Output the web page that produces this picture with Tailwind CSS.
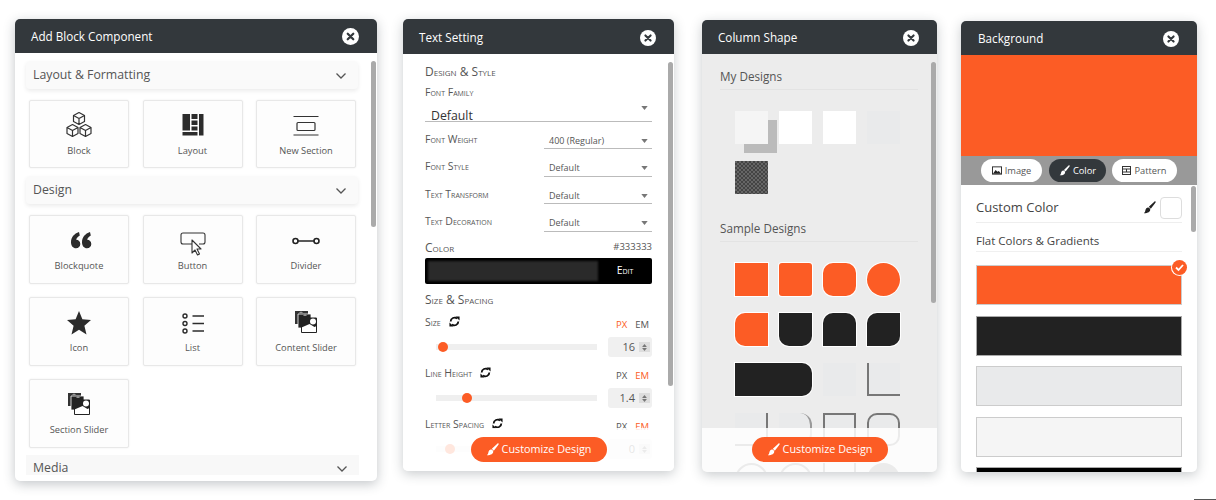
<!DOCTYPE html>
<html lang="en">
<head>
<meta charset="utf-8">
<title>Panels</title>
<script src="https://cdn.jsdelivr.net/npm/@tailwindcss/browser@4"></script>
</head>
<body class="bg-white font-['Open_Sans',sans-serif] overflow-hidden">
<svg class="hidden">
  <symbol id="x" viewBox="0 0 16 16"><circle cx="8" cy="8" r="8" fill="#fff"/><path d="M5.400 5.400l5.200 5.200M10.600 5.400l-5.200 5.200" stroke="#33383c" stroke-width="2.100" stroke-linecap="round"/></symbol>
  <symbol id="chev" viewBox="0 0 12 8"><path d="M1.500 1.500L6 6l4.500-4.500" fill="none" stroke="#555" stroke-width="1.300"/></symbol>
  <symbol id="brush" viewBox="0 0 16 16"><path d="M15.400.7c.4.4.3 1-.1 1.500L9.600 9.500 7.200 7.100 13.900.8c.5-.4 1.100-.5 1.500-.1zM6.500 8c1.300.2 2.200 1.100 2.400 2.400.1 2.600-2.300 4.600-7.900 4.600 1.500-1.200 1.700-2.200 2-3.800.3-1.700 1.700-3.400 3.500-3.200z" fill="currentColor"/></symbol>
  <symbol id="sync" viewBox="0 0 12 12"><path d="M1.800 6A4.200 4.200 0 0 1 8.800 2.900" fill="none" stroke="#111" stroke-width="2"/><path d="M7 .5h4.500V5z" fill="#111"/><path d="M10.200 6A4.200 4.200 0 0 1 3.200 9.100" fill="none" stroke="#111" stroke-width="2"/><path d="M5 11.500H.5V7z" fill="#111"/></symbol>
  <symbol id="caret" viewBox="0 0 8 5"><path d="M0 0h8L4 5z" fill="#777"/></symbol>
  <symbol id="stack" viewBox="0 0 22 22"><path d="M0 0h13v13H0z" fill="#333"/><path d="M3 3h13v14H3z" fill="#222" stroke="#fff" stroke-width=".8"/><path d="M6.500 7h15v14.500h-15z" fill="#fff" stroke="#222" stroke-width="1"/><path d="M6.500 7h15v8l-2 1-5-3-8 3.500z" fill="#222"/><circle cx="18" cy="10.500" r="3" fill="#fff"/><path d="M4 1.500c1-1 3-1 4 0zM8 4.500c1-1 3-1 4 0z" fill="#fff"/></symbol>
</svg>

<div class="flex items-start h-[500px] pl-[15px]">

  <!-- Add Block Component -->
  <section class="relative w-[362px] h-[462px] mt-[19px] bg-white rounded-[5px] shadow-[0_3px_12px_rgba(40,50,60,0.28)] overflow-hidden shrink-0">
    <header class="h-[34px] pt-[1px] bg-[#33383c] flex items-center justify-between pl-4 pr-[18px] text-white text-[11.700px]">
      <span>Add Block Component</span>
      <svg class="w-[17px] h-[17px]"><use href="#x"/></svg>
    </header>
    <div class="h-[422px] overflow-hidden pl-[11px] pt-2">
      <div class="w-[332px] h-7 pt-[1px] bg-[#fafafa] rounded shadow-[0_2px_4px_rgba(0,0,0,0.08)] flex items-center justify-between pl-[7px] pr-[11px] text-[12.300px] text-[#555]"><span>Layout &amp; Formatting</span><svg class="w-[12px] h-2"><use href="#chev"/></svg></div>
      <div class="grid grid-cols-[100px_100px_100px] gap-x-[13.500px] pl-[3px] mt-[11px]">
        <div class="h-[68px] border border-[#e8e8e8] bg-[#fdfdfd] rounded-[2px] shadow-[0_0_2px_rgba(0,0,0,0.08)] flex flex-col items-center pt-[12px] text-[9.300px] text-[#555]">
          <svg class="h-7 w-7 mb-[3px] overflow-visible" viewBox="0 2 28 28" fill="none" stroke="#333" stroke-width="1.200" stroke-linejoin="round"><path d="M14 1.500l5.500 3v6l-5.500 3-5.500-3v-6zM8.500 4.500L14 7.500l5.500-3M14 7.500v6"/><path d="M7.500 13.500l5.500 3v6l-5.500 3-5.500-3v-6zM2 16.500l5.500 3 5.500-3M7.500 19.500v6"/><path d="M20.500 13.500l5.500 3v6l-5.500 3-5.500-3v-6zM15 16.500l5.500 3 5.500-3M20.500 19.500v6"/></svg>
          <span>Block</span>
        </div>
        <div class="h-[68px] border border-[#e8e8e8] bg-[#fdfdfd] rounded-[2px] shadow-[0_0_2px_rgba(0,0,0,0.08)] flex flex-col items-center pt-[12px] text-[9.300px] text-[#555]">
          <svg class="h-7 w-7 mb-[3px] overflow-visible" viewBox="0 2 28 28" fill="#2c2c2c"><path d="M3.500 3h7.500v16.500H3.500zM12.500 3h6v5h-6zM20 3h4.500v21.500H20zM12.500 9.500h6v4.500h-6zM12.500 15.500h6v4h-6zM3.500 21h15v3.500h-15z"/></svg>
          <span>Layout</span>
        </div>
        <div class="h-[68px] border border-[#e8e8e8] bg-[#fdfdfd] rounded-[2px] shadow-[0_0_2px_rgba(0,0,0,0.08)] flex flex-col items-center pt-[12px] text-[9.300px] text-[#555]">
          <svg class="h-7 w-7 mb-[3px]" viewBox="0 0 28 28" fill="none" stroke="#333" stroke-width="1.200"><path d="M1.500 3.500h25M1.500 22h25"/><rect x="5" y="9.500" width="18" height="8" rx="1"/></svg>
          <span>New Section</span>
        </div>
      </div>
      <div class="w-[332px] h-7 pt-[1px] bg-[#fafafa] rounded shadow-[0_2px_4px_rgba(0,0,0,0.08)] flex items-center justify-between pl-[7px] pr-[11px] text-[12.300px] text-[#555] mt-2"><span>Design</span><svg class="w-[12px] h-2"><use href="#chev"/></svg></div>
      <div class="grid grid-cols-[100px_100px_100px] gap-x-[13.500px] gap-y-[13px] pl-[3px] mt-[11px]">
        <div class="h-[69px] border border-[#e8e8e8] bg-[#fdfdfd] rounded-[2px] shadow-[0_0_2px_rgba(0,0,0,0.08)] flex flex-col items-center pt-[12px] text-[9.300px] text-[#555]">
          <svg class="h-7 w-7 mb-[3px]" viewBox="0 0 28 28" fill="#2c2c2c"><path d="M14 4c-4.800 1.700-8 5.200-8 10.300 0 3.700 2.100 6 5 6 2.500 0 4.300-1.900 4.300-4.300 0-2.500-1.800-4.200-4.100-4.200.4-1.700 1.500-3 3.600-4.200zM25 4c-4.800 1.700-8 5.200-8 10.300 0 3.700 2.100 6 5 6 2.500 0 4.300-1.900 4.300-4.300 0-2.500-1.800-4.200-4.100-4.200.4-1.700 1.500-3 3.600-4.200z"/></svg>
          <span>Blockquote</span>
        </div>
        <div class="h-[69px] border border-[#e8e8e8] bg-[#fdfdfd] rounded-[2px] shadow-[0_0_2px_rgba(0,0,0,0.08)] flex flex-col items-center pt-[12px] text-[9.300px] text-[#555]">
          <svg class="h-7 w-7 mb-[3px]" viewBox="0 0 28 28" fill="none" stroke="#333" stroke-width="1.100"><path d="M13 16H4a2 2 0 0 1-2-2V7a2 2 0 0 1 2-2h20a2 2 0 0 1 2 2v7a2 2 0 0 1-2 2h-4"/><path d="M13 12v13l3-3 2.500 5 2-1-2.500-5h4z" fill="#fff" stroke-linejoin="round"/></svg>
          <span>Button</span>
        </div>
        <div class="h-[69px] border border-[#e8e8e8] bg-[#fdfdfd] rounded-[2px] shadow-[0_0_2px_rgba(0,0,0,0.08)] flex flex-col items-center pt-[12px] text-[9.300px] text-[#555]">
          <svg class="h-7 w-7 mb-[3px]" viewBox="0 0 28 28" fill="none" stroke="#222" stroke-width="1.600"><circle cx="3.500" cy="13" r="2.500"/><circle cx="24.500" cy="13" r="2.500"/><path d="M6 13h16"/></svg>
          <span>Divider</span>
        </div>
        <div class="h-[69px] border border-[#e8e8e8] bg-[#fdfdfd] rounded-[2px] shadow-[0_0_2px_rgba(0,0,0,0.08)] flex flex-col items-center pt-[12px] text-[9.300px] text-[#555]">
          <svg class="h-7 w-7 mb-[3px]" viewBox="0 0 28 28" fill="#2c2c2c"><path d="M14 1l3.400 8.300 8.600.7-6.600 5.700 2.100 8.800L14 19.700 6.500 24.500l2.100-8.800L2 10l8.600-.7z"/></svg>
          <span>Icon</span>
        </div>
        <div class="h-[69px] border border-[#e8e8e8] bg-[#fdfdfd] rounded-[2px] shadow-[0_0_2px_rgba(0,0,0,0.08)] flex flex-col items-center pt-[12px] text-[9.300px] text-[#555]">
          <svg class="h-7 w-7 mb-[3px]" viewBox="0 0 28 28" fill="none" stroke="#2c2c2c" stroke-width="1.400"><circle cx="6" cy="6" r="2"/><circle cx="6" cy="13.500" r="2"/><circle cx="6" cy="21" r="2"/><path d="M13.500 6H25M13.500 13.500H25M13.500 21H25"/></svg>
          <span>List</span>
        </div>
        <div class="h-[69px] border border-[#e8e8e8] bg-[#fdfdfd] rounded-[2px] shadow-[0_0_2px_rgba(0,0,0,0.08)] flex flex-col items-center pt-[12px] text-[9.300px] text-[#555]">
          <svg class="h-[22px] w-[22px] mt-[1px] mb-[8px]"><use href="#stack"/></svg>
          <span>Content Slider</span>
        </div>
        <div class="h-[69px] border border-[#e8e8e8] bg-[#fdfdfd] rounded-[2px] shadow-[0_0_2px_rgba(0,0,0,0.08)] flex flex-col items-center pt-[12px] text-[9.300px] text-[#555]">
          <svg class="h-[22px] w-[22px] mt-[1px] mb-[8px]"><use href="#stack"/></svg>
          <span>Section Slider</span>
        </div>
      </div>
      <div class="w-[333px] h-5 bg-[#f8f8f8] flex items-start justify-between pl-[7px] pr-[11px] pt-[5px] text-[12.300px] text-[#555] mt-[7px]"><span class="leading-[15px]">Media</span><svg class="w-[12px] h-2 mt-[5px]"><use href="#chev"/></svg></div>
    </div>
    <div class="absolute right-[1px] top-[42px] w-[5px] h-[166px] rounded bg-[#aaa]"></div>
  </section>

  <!-- Text Setting -->
  <section class="relative w-[271px] h-[452px] mt-[19px] ml-[26px] bg-white rounded-[5px] shadow-[0_3px_12px_rgba(40,50,60,0.25)] overflow-hidden shrink-0 text-[#555] [font-variant:small-caps]">
    <header class="h-[35px] pt-[2px] bg-[#33383c] flex items-center justify-between pl-4 pr-[18px] text-white text-[11.700px] [font-variant:normal]">
      <span>Text Setting</span>
      <svg class="w-4 h-4"><use href="#x"/></svg>
    </header>
    <div class="px-[22px] pt-[9px] w-[271px]">
      <div class="text-[12px] leading-[18px]">Design &amp; Style</div>
      <div class="text-[10.500px] leading-[16px] mt-[3px]">Font Family</div>
      <div class="flex items-center justify-between h-[21px] mt-[1px] pt-[9px] border-b border-[#bbb] pl-[6px] pr-[4px] text-[12.300px] leading-[12px] [font-variant:normal] text-[#333]"><span>Default</span><svg class="w-[7px] h-1 -mt-4"><use href="#caret"/></svg></div>
      <div class="flex items-end justify-between h-[27px]"><span class="text-[10.500px] self-center mt-[9px]">Font Weight</span><span class="w-[108px] h-[19px] pt-[4px] border-b border-[#bbb] pl-[5px] pr-[4px] flex items-center justify-between text-[9px] [font-variant:normal]">400 (Regular)<svg class="w-[7px] h-1"><use href="#caret"/></svg></span></div>
      <div class="flex items-end justify-between h-[27.500px]"><span class="text-[10.500px] self-center mt-[9px]">Font Style</span><span class="w-[108px] h-[19px] pt-[3px] border-b border-[#bbb] pl-[5px] pr-[4px] flex items-center justify-between text-[9px] [font-variant:normal]">Default<svg class="w-[7px] h-1"><use href="#caret"/></svg></span></div>
      <div class="flex items-end justify-between h-[27.500px]"><span class="text-[10.500px] self-center mt-[9px]">Text Transform</span><span class="w-[108px] h-[19px] pt-[3px] border-b border-[#bbb] pl-[5px] pr-[4px] flex items-center justify-between text-[9px] [font-variant:normal]">Default<svg class="w-[7px] h-1"><use href="#caret"/></svg></span></div>
      <div class="flex items-end justify-between h-[27.500px]"><span class="text-[10.500px] self-center mt-[9px]">Text Decoration</span><span class="w-[108px] h-[19px] pt-[3px] border-b border-[#bbb] pl-[5px] pr-[4px] flex items-center justify-between text-[9px] [font-variant:normal]">Default<svg class="w-[7px] h-1"><use href="#caret"/></svg></span></div>
      <div class="flex items-center justify-between h-[18px] mt-[7px] text-[12px]"><span>Color</span><span class="text-[9.500px] [font-variant:normal]">#333333</span></div>
      <div class="h-[26px] mt-[1.500px] bg-black rounded-[2px] flex items-center justify-between pl-[3px] py-[3px]"><div class="w-[170px] h-full bg-[#2a2a2a] blur-[1px]"></div><span class="text-[10.500px] text-white w-[54px] text-center">Edit</span></div>
      <div class="text-[12px] leading-[18px] mt-[7px]">Size &amp; Spacing</div>
      <div class="flex items-center justify-between h-[16px] mt-[7px] pr-[3px]"><span class="flex items-center gap-[8px] text-[10.500px] -mt-[3px]">Size <svg class="w-[11px] h-[11px] -mt-[3px]"><use href="#sync"/></svg></span><span class="flex gap-[8px] text-[9.500px] uppercase [font-variant:normal] mt-[2px] text-[#555]"><span class="text-[#fc5c25]">px</span><span>em</span></span></div>
      <div class="flex items-center justify-between h-[20px] mt-[5px] pl-[11px]"><div class="relative w-[161px] h-[6px] bg-[#efefef]"><span class="absolute left-[2px] -top-[2px] w-[10px] h-[10px] rounded-full bg-[#fc5c25]"></span></div><div class="w-[44px] h-[20px] bg-[#f0f0f0] rounded-[3px] flex items-center justify-end gap-[4px] pr-[2px] text-[11px] [font-variant:normal]">16<span class="w-[11px] h-[10px] bg-[#ddd] flex flex-col items-center justify-center gap-[1px]"><svg class="w-[5px] h-[3px] rotate-180"><use href="#caret"/></svg><svg class="w-[5px] h-[3px]"><use href="#caret"/></svg></span></div></div>
      <div class="flex items-center justify-between h-[16px] mt-[10px] pr-[3px]"><span class="flex items-center gap-[8px] text-[10.500px] -mt-[3px]">Line Height <svg class="w-[11px] h-[11px] -mt-[3px]"><use href="#sync"/></svg></span><span class="flex gap-[8px] text-[9.500px] uppercase [font-variant:normal] mt-[2px] text-[#555]"><span>px</span><span class="text-[#fc5c25]">em</span></span></div>
      <div class="flex items-center justify-between h-[20px] mt-[5px] pl-[11px]"><div class="relative w-[161px] h-[6px] bg-[#efefef]"><span class="absolute left-[26px] -top-[2px] w-[10px] h-[10px] rounded-full bg-[#fc5c25]"></span></div><div class="w-[44px] h-[20px] bg-[#f0f0f0] rounded-[3px] flex items-center justify-end gap-[4px] pr-[2px] text-[11px] [font-variant:normal]">1.4<span class="w-[11px] h-[10px] bg-[#ddd] flex flex-col items-center justify-center gap-[1px]"><svg class="w-[5px] h-[3px] rotate-180"><use href="#caret"/></svg><svg class="w-[5px] h-[3px]"><use href="#caret"/></svg></span></div></div>
      <div class="flex items-center justify-between h-[16px] mt-[10px] pr-[3px]"><span class="flex items-center gap-[8px] text-[10.500px] -mt-[3px]">Letter Spacing <svg class="w-[11px] h-[11px] -mt-[3px]"><use href="#sync"/></svg></span><span class="flex gap-[8px] text-[9.500px] uppercase [font-variant:normal] mt-[2px] text-[#555]"><span>px</span><span class="text-[#fc5c25]">em</span></span></div>
      <div class="flex items-center justify-between h-[20px] mt-[5px] pl-[11px]"><div class="relative w-[161px] h-[6px] bg-[#efefef]"><span class="absolute left-[9px] -top-[2px] w-[10px] h-[10px] rounded-full bg-[#fc5c25]"></span></div><div class="w-[44px] h-[20px] bg-[#f0f0f0] rounded-[3px] flex items-center justify-end gap-[4px] pr-[2px] text-[11px] [font-variant:normal]">0<span class="w-[11px] h-[10px] bg-[#ddd] flex flex-col items-center justify-center gap-[1px]"><svg class="w-[5px] h-[3px] rotate-180"><use href="#caret"/></svg><svg class="w-[5px] h-[3px]"><use href="#caret"/></svg></span></div></div>
    </div>
    <div class="absolute left-0 right-0 bottom-0 h-[43px] bg-white/85 flex items-start justify-center pt-[9px] [font-variant:normal]">
      <span class="w-[136px] h-[25px] rounded-full bg-[#fc5c25] text-white text-[10.800px] flex items-center justify-center gap-[3px]"><svg class="w-[13px] h-[13px]"><use href="#brush"/></svg>Customize Design</span>
    </div>
    <div class="absolute right-[1px] top-[43px] w-[5px] h-[324px] rounded bg-[#aaa]"></div>
  </section>

  <!-- Column Shape -->
  <section class="relative w-[235px] h-[452px] mt-[20px] ml-[28px] bg-[#ececec] rounded-[5px] shadow-[0_3px_12px_rgba(40,50,60,0.25)] overflow-hidden shrink-0 text-[#555]">
    <header class="h-[34px] pt-[2px] bg-[#33383c] flex items-center justify-between pl-4 pr-[18px] text-white text-[11.700px]">
      <span>Column Shape</span>
      <svg class="w-4 h-4"><use href="#x"/></svg>
    </header>
    <div class="pl-[18px] pt-[12px]">
      <div class="w-[198px] h-[24px] border-b border-[#e3e3e3] text-[11.700px] leading-[20px]">My Designs</div>
      <div class="grid grid-cols-[33px_33px_33px_33px] auto-rows-[33px] gap-x-[11px] gap-y-[17px] pl-[15px] mt-[21px]">
        <div class="bg-[#f5f5f5] shadow-[9px_9px_0_#bbb]"></div>
        <div class="bg-white relative"></div>
        <div class="bg-white"></div>
        <div class="bg-[#e9eaeb]"></div>
        <div class="bg-[repeating-conic-gradient(#444_0_25%,#666_0_50%)] bg-size-[4px_4px]"></div>
      </div>
      <div class="w-[198px] h-[24px] border-b border-[#e3e3e3] text-[11.700px] leading-[20px] mt-[24px]">Sample Designs</div>
      <div class="grid grid-cols-[33px_33px_33px_33px] auto-rows-[33px] gap-x-[11px] gap-y-[17px] pl-[15px] mt-[21px]">
        <div class="bg-[#fc5c25] ring-1 ring-white"></div>
        <div class="bg-[#fc5c25] ring-1 ring-white rounded-[3px]"></div>
        <div class="bg-[#fc5c25] ring-1 ring-white rounded-[10px]"></div>
        <div class="bg-[#fc5c25] ring-1 ring-white rounded-full"></div>
        <div class="bg-[#fc5c25] ring-1 ring-white rounded-l-[10px]"></div>
        <div class="bg-[#222] ring-1 ring-white rounded-b-[10px]"></div>
        <div class="bg-[#222] ring-1 ring-white rounded-t-[10px]"></div>
        <div class="bg-[#222] ring-1 ring-white rounded-tl-[10px] rounded-br-[10px]"></div>
        <div class="col-span-2 bg-[#222] ring-1 ring-white rounded-r-[10px]"></div>
        <div class="bg-[#e9eaeb]"></div>
        <div class="border-l-2 border-b-2 border-[#777] bg-[#e9eaeb]"></div>
        <div class="border-r-2 border-b-2 border-[#777] bg-[#e9eaeb]"></div>
        <div class="border-r-2 border-[#999] rounded-r-[12px] bg-[#e9eaeb]"></div>
        <div class="border-2 border-[#777] bg-[#e9eaeb]"></div>
        <div class="border-2 border-[#777] rounded-[10px] bg-[#e9eaeb]"></div>
        <div class="border-2 border-[#777] rounded-full bg-[#e9eaeb]"></div>
        <div class="border-2 border-[#777] rounded-full bg-[#e9eaeb]"></div>
        <div class="border-x-2 border-[#777] bg-[#e9eaeb]"></div>
        <div class="rounded-full bg-[#777]"></div>
      </div>
    </div>
    <div class="absolute left-0 right-0 bottom-0 h-[44px] bg-white/85 flex items-start justify-center pt-[9px]">
      <span class="w-[136px] h-[25px] rounded-full bg-[#fc5c25] text-white text-[10.800px] flex items-center justify-center gap-[3px]"><svg class="w-[13px] h-[13px]"><use href="#brush"/></svg>Customize Design</span>
    </div>
    <div class="absolute right-[1px] top-[42px] w-[5px] h-[241px] rounded bg-[#aaa]"></div>
  </section>

  <!-- Background -->
  <section class="relative w-[236px] h-[451px] mt-[21px] ml-[24px] bg-white rounded-[5px] shadow-[0_3px_12px_rgba(40,50,60,0.25)] overflow-hidden shrink-0 text-[#555]">
    <header class="h-[34px] pt-[2px] bg-[#33383c] flex items-center justify-between pl-[17px] pr-[18px] text-white text-[11.700px]">
      <span>Background</span>
      <svg class="w-4 h-4"><use href="#x"/></svg>
    </header>
    <div class="h-[101px] bg-[#fc5c25]"></div>
    <div class="h-[29px] bg-[#999] flex items-center pl-[20px] text-[9.300px]">
      <span class="w-[61px] h-[23px] rounded-full bg-white flex items-center justify-center gap-[3px]"><svg class="w-[10px] h-[9px]" viewBox="0 0 11 9"><rect x=".5" y=".5" width="10" height="8" fill="none" stroke="#222"/><path d="M1 8l3-4 2 2 1.500-1L10 8z" fill="#222"/></svg>Image</span>
      <span class="w-[57px] h-[23px] ml-[7px] rounded-full bg-[#33383c] text-white flex items-center justify-center gap-[3px]"><svg class="w-[11px] h-[11px]"><use href="#brush"/></svg>Color</span>
      <span class="w-[65px] h-[23px] ml-[6px] rounded-full bg-white flex items-center justify-center gap-[3px]"><svg class="w-[9px] h-[9px]" viewBox="0 0 9 9" fill="none" stroke="#333"><rect x=".5" y=".5" width="8" height="8"/><path d="M.5 3h8M.5 6h8M4.500 3v3"/></svg>Pattern</span>
    </div>
    <div class="px-[15px] w-[236px]">
      <div class="flex items-center justify-between h-[38px] pt-[8px] border-b border-[#eee] w-[206px] text-[13px] text-[#444]"><span>Custom Color</span><span class="flex items-center gap-[4px]"><svg class="w-[13px] h-[13px] text-[#222]"><use href="#brush"/></svg><span class="w-[22px] h-[22px] rounded-[4px] border border-[#ddd] bg-white"></span></span></div>
      <div class="h-[29px] border-b border-[#f0f0f0] w-[206px] text-[11.500px] leading-[35px] text-[#444]">Flat Colors &amp; Gradients</div>
      <div class="w-[206px] flex flex-col gap-[10.500px] mt-[13px]">
        <div class="relative h-[40px] bg-[#fc5c25] border border-[#ccc]"><span class="absolute -right-[6px] -top-[6px] w-[15px] h-[15px] rounded-full bg-[#fc5c25] ring-1 ring-white flex items-center justify-center"><svg class="w-[9px] h-[9px]" viewBox="0 0 9 9" fill="none" stroke="#fff" stroke-width="1.800"><path d="M1 4.500l2.500 2.500L8 2"/></svg></span></div>
        <div class="h-[40px] bg-[#222] border border-[#aaa]"></div>
        <div class="h-[40px] bg-[#e9eaeb] border border-[#ccc]"></div>
        <div class="h-[40px] bg-[#f5f5f5] border border-[#ccc]"></div>
        <div class="h-[40px] bg-black border border-[#aaa]"></div>
      </div>
    </div>
    <div class="absolute right-[1px] top-[165px] w-[5px] h-[46px] rounded bg-[#aaa]"></div>
  </section>
</div>
<div class="fixed right-0 bottom-0 w-[22px] h-px bg-[#555]"></div>
</body>
</html>
